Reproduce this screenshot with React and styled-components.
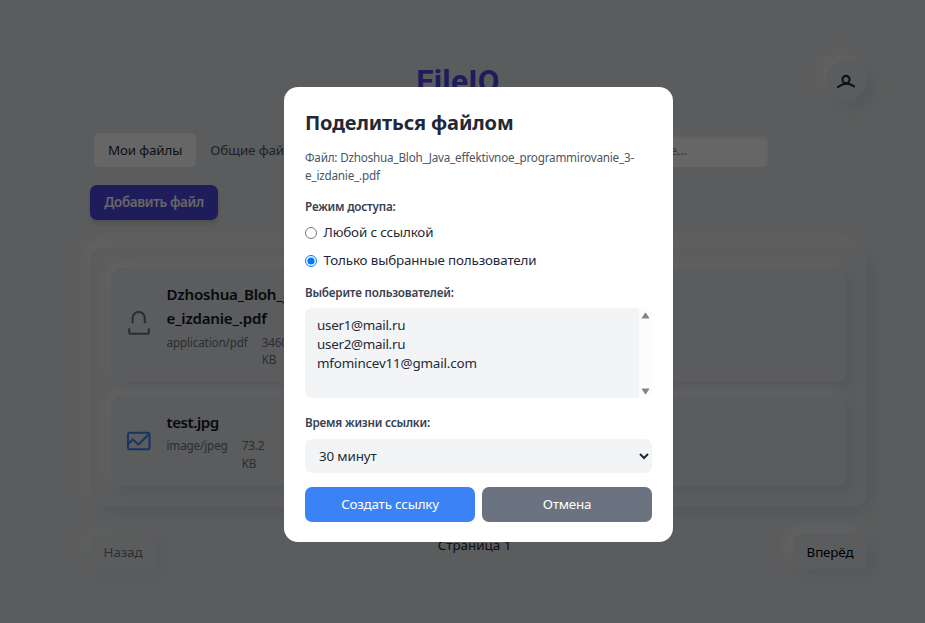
import React from "react";
import styled, { createGlobalStyle } from "styled-components";

const Global = createGlobalStyle`
  * { box-sizing: border-box; }
  html { font-size: 14px; }
  body {
    margin: 0;
    overflow: hidden;
    background: #e4e6e8;
    font-family: "Segoe UI", "Noto Sans", "Open Sans", sans-serif;
    color: #1f2937;
  }
  button, select, input { font: inherit; letter-spacing: inherit; }
`;

const raised = "7px 7px 14px #cfd8e6, -6px -6px 14px #f4f4f5";

const Page = styled.div`
  position: relative;
  width: 957px;
  height: 623px;
  padding: 60px 90px 0;
  overflow: hidden;
  font-size: 13.4px;
  line-height: 21px;
  letter-spacing: -0.15px;
`;
const Header = styled.header`
  display: flex;
  height: 41px;
`;
const Title = styled.h1`
  flex: 1;
  margin: 0;
  text-align: center;
  font-family: "Segoe UI", Roboto, sans-serif;
  font-size: 31.5px;
  line-height: 43px;
  font-weight: 700;
  letter-spacing: 0.3px;
  color: #4f46e5;
`;
const Avatar = styled.button`
  display: grid;
  place-items: center;
  width: 41px;
  height: 41px;
  padding: 0;
  border: 0;
  border-radius: 50%;
  background: #e4e6e8;
  color: #1f2937;
  box-shadow: ${raised};
  svg { margin: 2px 2px 0 0; }
`;
const Toolbar = styled.div`
  display: flex;
  justify-content: space-between;
  height: 35px;
  margin-top: 32px;
  padding-left: 4px;
`;
const Tabs = styled.nav`
  display: flex;
`;
const Tab = styled.button`
  height: 34px;
  padding: 0 14px;
  border: 0;
  border-radius: 5px;
  background: ${(p) => (p.$active ? "#fff" : "transparent")};
  color: ${(p) => (p.$active ? "#1f2937" : "#4b5563")};
  white-space: nowrap;
`;
const Search = styled.input`
  width: 224px;
  height: 34px;
  margin-right: 99px;
  padding: 0 14px 0 17px;
  border: 0;
  border-radius: 5px;
  background: #fff;
  box-shadow: inset 0 4px 4px #e0e4ec;
  &::placeholder { color: #7c8698; }
`;
const AddButton = styled.button`
  display: block;
  width: 128px;
  height: 35px;
  margin-top: 17px;
  padding: 0;
  border: 0;
  border-radius: 7px;
  background: #4f46e5;
  color: #fff;
  font-weight: 600;
  letter-spacing: -0.33px;
  box-shadow: 0 3px 5px rgba(0, 0, 0, 0.14);
`;
const Panel = styled.main`
  display: flex;
  flex-direction: column;
  gap: 14px;
  height: 260px;
  margin-top: 27px;
  padding: 21px;
  border-radius: 14px;
  box-shadow: ${raised};
`;
const Card = styled.article`
  display: flex;
  align-items: center;
  height: ${(p) => p.$height}px;
  padding: 0 14px;
  border-radius: 10px;
  background: #e4e6e8;
  box-shadow: ${raised};
`;
const CardIcon = styled.div`
  display: flex;
  width: 28px;
  margin-right: 13.5px;
`;
const Info = styled.div`
  width: 130px;
`;
const FileName = styled.h2`
  margin: 0;
  font-size: 15.1px;
  line-height: 24.5px;
  font-weight: 600;
  letter-spacing: ${(p) => p.$tracking}px;
  color: #111827;
  white-space: nowrap;
`;
const Meta = styled.div`
  display: flex;
  gap: 14px;
  margin-top: 3px;
  font-size: 11.7px;
  line-height: 17.5px;
  color: #6b7280;
`;
const Pager = styled.footer`
  display: flex;
  justify-content: space-between;
  margin-top: 27px;
`;
const PageLabel = styled.span`
  padding-top: 1px;
  letter-spacing: 0;
`;
const PageButton = styled.button`
  width: ${(p) => p.$width}px;
  height: 35px;
  padding: 2px 0 0;
  border: 0;
  border-radius: 7px;
  background: #e4e6e8;
  color: #000;
  box-shadow: ${raised};
  opacity: ${(p) => (p.disabled ? 0.5 : 1)};
`;
const Overlay = styled.div`
  position: absolute;
  inset: 0;
  display: grid;
  justify-content: center;
  align-content: start;
  padding-top: 86.5px;
  background: rgba(0, 0, 0, 0.6);
`;
const Dialog = styled.section`
  width: 389px;
  height: 455px;
  padding: 21.5px 21px 0;
  border-radius: 14px;
  background: #fff;
`;
const DialogTitle = styled.h2`
  margin: 0 0 11px;
  font-size: 20px;
  line-height: 30px;
  font-weight: 700;
  letter-spacing: -0.12px;
`;
const FileLine = styled.p`
  margin: 0 0 14px;
  font-size: 11.7px;
  line-height: 17.5px;
  letter-spacing: -0.2px;
  white-space: nowrap;
  color: #4b5563;
`;
const Label = styled.div`
  height: 17px;
  font-size: 11.7px;
  line-height: 17px;
  font-weight: 600;
  letter-spacing: -0.2px;
  color: #374151;
`;
const RadioGroup = styled.div`
  display: grid;
  gap: 7px;
  margin: 7px 0 13px;
`;
const RadioRow = styled.label`
  display: flex;
  align-items: center;
  height: 21px;
  input { width: 12px; height: 12px; margin: 0 6.5px 0 0; }
`;
const ListBox = styled.div`
  display: flex;
  height: 90px;
  margin: 7px 0 16px;
  border-radius: 7px;
  overflow: hidden;
  background: #f3f4f6;
`;
const Options = styled.div`
  flex: 1;
  padding: 8px 12px;
  line-height: 19px;
`;
const Option = styled.div`
  letter-spacing: ${(p) => p.$tracking}px;
`;
const ScrollTrack = styled.div`
  display: flex;
  flex-direction: column;
  justify-content: space-between;
  align-items: center;
  width: 13px;
  padding: 4px 0 3px;
  background: #fcfcfc;
`;
const Select = styled.select`
  display: block;
  width: 100%;
  height: 34px;
  margin: 7.5px 0 14px;
  padding: 0 10px;
  border: 0;
  border-radius: 7px;
  background: #f3f4f6;
  color: #1f2937;
`;
const Actions = styled.div`
  display: grid;
  grid-template-columns: 1fr 1fr;
  gap: 7px;
`;
const Action = styled.button`
  height: 35px;
  border: 0;
  border-radius: 7px;
  color: #fff;
  letter-spacing: -0.2px;
  background: ${(p) => (p.$primary ? "#3b82f6" : "#6b7280")};
`;

const UserIcon = () => (
  <svg width="20" height="16" viewBox="0 0 20 16" fill="none" stroke="currentColor" strokeWidth="2.1" strokeLinecap="round">
    <circle cx="10" cy="5.5" r="3.6" />
    <path d="M2 13Q10 6.6 18 12.3" />
  </svg>
);
const FileIcon = () => (
  <svg width="28" height="28" viewBox="0 0 28 28" fill="none" stroke="#6b7280" strokeWidth="2.1" strokeLinecap="round" strokeLinejoin="round">
    <path d="M7.600 11.500V7a6.100 6.100 0 0 1 12.200 0v4.500M4.200 18v3.200q0 1.500 1.500 1.500h16.600q1.500 0 1.500-1.500v-3.200" />
  </svg>
);
const ImageIcon = () => (
  <svg width="28" height="28" viewBox="0 0 28 28" fill="none" stroke="#3b82f6" strokeWidth="2.1" strokeLinecap="round" strokeLinejoin="round">
    <rect x="3" y="5.700" width="21.500" height="16.500" rx="1.800" />
    <path d="M4 16.200l3.800-3.800 5.600 5.200L24 6.900" />
  </svg>
);
const Triangle = ({ down }) => (
  <svg width="9" height="7" viewBox="0 0 9 7" fill="#858585">
    <path d={down ? "M1 .5h7q.6 0 .3.5L5 6q-.5.5-1 0L.7 1Q.4.5 1 .5z" : "M1 6.5h7q.6 0 .3-.5L5 1Q4.5.5 4 1L.7 6q-.3.5.3.5z"} />
  </svg>
);

export default function App() {
  return (
    <Page>
      <Global />
      <Header>
        <Title>FileIO</Title>
        <Avatar aria-label="Профиль"><UserIcon /></Avatar>
      </Header>
      <Toolbar>
        <Tabs>
          <Tab $active>Мои файлы</Tab>
          <Tab>Общие файлы</Tab>
        </Tabs>
        <Search placeholder="Введите название..." />
      </Toolbar>
      <AddButton>Добавить файл</AddButton>
      <Panel>
        <Card $height={115}>
          <CardIcon><FileIcon /></CardIcon>
          <Info>
            <FileName $tracking={-0.2}>Dzhoshua_Bloh_Java_<br />e_izdanie_.pdf</FileName>
            <Meta><span>application/pdf</span><span>34608.1 KB</span></Meta>
          </Info>
        </Card>
        <Card $height={90}>
          <CardIcon><ImageIcon /></CardIcon>
          <Info>
            <FileName $tracking={-0.45}>test.jpg</FileName>
            <Meta><span>image/jpeg</span><span>73.2<br />KB</span></Meta>
          </Info>
        </Card>
      </Panel>
      <Pager>
        <PageButton $width={66} disabled>Назад</PageButton>
        <PageLabel>Страница 1</PageLabel>
        <PageButton $width={74}>Вперёд</PageButton>
      </Pager>
      <Overlay>
        <Dialog role="dialog">
          <DialogTitle>Поделиться файлом</DialogTitle>
          <FileLine>Файл: Dzhoshua_Bloh_Java_effektivnoe_programmirovanie_3-<br />e_izdanie_.pdf</FileLine>
          <Label>Режим доступа:</Label>
          <RadioGroup>
            <RadioRow><input type="radio" name="mode" />Любой с ссылкой</RadioRow>
            <RadioRow><input type="radio" name="mode" defaultChecked />Только выбранные пользователи</RadioRow>
          </RadioGroup>
          <Label>Выберите пользователей:</Label>
          <ListBox>
            <Options>
              <Option $tracking={-0.28}>user1@mail.ru</Option>
              <Option $tracking={-0.28}>user2@mail.ru</Option>
              <Option $tracking={-0.16}>mfomincev11@gmail.com</Option>
            </Options>
            <ScrollTrack><Triangle /><Triangle down /></ScrollTrack>
          </ListBox>
          <Label>Время жизни ссылки:</Label>
          <Select><option>30 минут</option></Select>
          <Actions>
            <Action $primary>Создать ссылку</Action>
            <Action>Отмена</Action>
          </Actions>
        </Dialog>
      </Overlay>
    </Page>
  );
}
